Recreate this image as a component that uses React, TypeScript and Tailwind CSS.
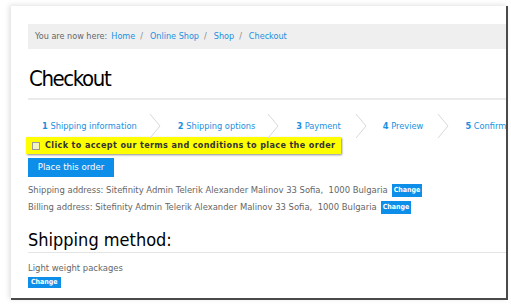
import React from "react";

const Chevron = () => (
  <svg width="12" height="24" viewBox="0 0 12 24" className="shrink-0">
    <path d="M1 0 L11 12 L1 24" fill="none" stroke="#d8d8d8" strokeWidth="1" />
  </svg>
);

const Step = ({ n, label }: { n: string; label: string }) => (
  <span className="text-[#1a8fe0] whitespace-nowrap">
    <span className="font-bold">{n}</span> {label}
  </span>
);

const ChangeBtn = () => (
  <span className="inline-block bg-[#0d8ee9] text-white text-[7px] font-bold leading-[13px] px-[2px] ml-[4px] align-middle">
    Change
  </span>
);

const Sep = () => <span className="text-[#888] ml-[5px] mr-[7px]">/</span>;

export default function App() {
  return (
    <div
      className="w-[511px] h-[306px] bg-white overflow-hidden relative"
      style={{ fontFamily: "'DejaVu Sans Condensed', 'DejaVu Sans', sans-serif" }}
    >
      <div className="absolute left-[11px] top-[6px] w-[497px] h-[294px] bg-white border-r-2 border-b-2 border-[#4a4a4a] shadow-[-2px_-1px_5px_rgba(0,0,0,0.12)] overflow-hidden">
        <div className="pl-[17px] pt-[18px]">
          <div className="h-[25px] bg-[#efefef] flex items-center pl-[7px] text-[9px] whitespace-nowrap">
            <span className="text-[#666]">You are now here:</span>
            <span className="text-[#1a8fe0] ml-[4px]">Home</span>
            <Sep />
            <span className="text-[#1a8fe0]">Online Shop</span>
            <Sep />
            <span className="text-[#1a8fe0]">Shop</span>
            <Sep />
            <span className="text-[#1a8fe0]">Checkout</span>
          </div>
          <h1 className="text-[22px] leading-[30px] text-black mt-[15px] pl-[1px] tracking-[-1.4px]">Checkout</h1>
          <div className="h-[2px] bg-[#ebebeb] mt-[4px]" />
          <div className="flex items-center text-[9.2px] mt-[14px] pl-[14px] h-[24px] whitespace-nowrap">
            <Step n="1" label="Shipping information" />
            <div className="ml-[12px] mr-[17px]"><Chevron /></div>
            <Step n="2" label="Shipping options" />
            <div className="ml-[12px] mr-[17px]"><Chevron /></div>
            <Step n="3" label="Payment" />
            <div className="ml-[14px] mr-[16px]"><Chevron /></div>
            <Step n="4" label="Preview" />
            <div className="ml-[14px] mr-[16px]"><Chevron /></div>
            <Step n="5" label="Confirm" />
          </div>
          <div className="-ml-[2px] w-[315px] h-[17px] bg-[#ffff00] shadow-[1px_1px_2px_rgba(0,0,0,0.45)] flex items-center pl-[6px] -mt-[1px]">
            <span className="w-[8px] h-[8px] border border-[#999] bg-[#f3f3c0] shrink-0" />
            <span className="ml-[5px] text-[9px] font-bold text-[#333] whitespace-nowrap tracking-[0.35px]">
              Click to accept our terms and conditions to place the order
            </span>
          </div>
          <div className="mt-[4px] w-[86px] h-[19px] bg-[#0d8ee9] text-white text-[9.5px] flex items-center justify-center">
            Place this order
          </div>
          <div className="text-[#666] text-[9.4px] leading-[17px] mt-[4px] whitespace-nowrap">
            <div>Shipping address: Sitefinity Admin Telerik Alexander Malinov 33 Sofia,&nbsp; 1000 Bulgaria<ChangeBtn /></div>
            <div>Billing address: Sitefinity Admin Telerik Alexander Malinov 33 Sofia,&nbsp; 1000 Bulgaria<ChangeBtn /></div>
          </div>
          <h2 className="text-[18px] leading-[22px] text-black mt-[14px]">Shipping method:</h2>
          <div className="h-[1px] bg-[#e5e5e5] mt-[1px]" />
          <div className="text-[#666] text-[9.4px] leading-[14px] mt-[8px]">Light weight packages</div>
          <div className="flex mt-[2px]">
            <span className="bg-[#0d8ee9] text-white text-[7px] font-bold leading-[11px] px-[3px]">Change</span>
          </div>
        </div>
      </div>
    </div>
  );
}
